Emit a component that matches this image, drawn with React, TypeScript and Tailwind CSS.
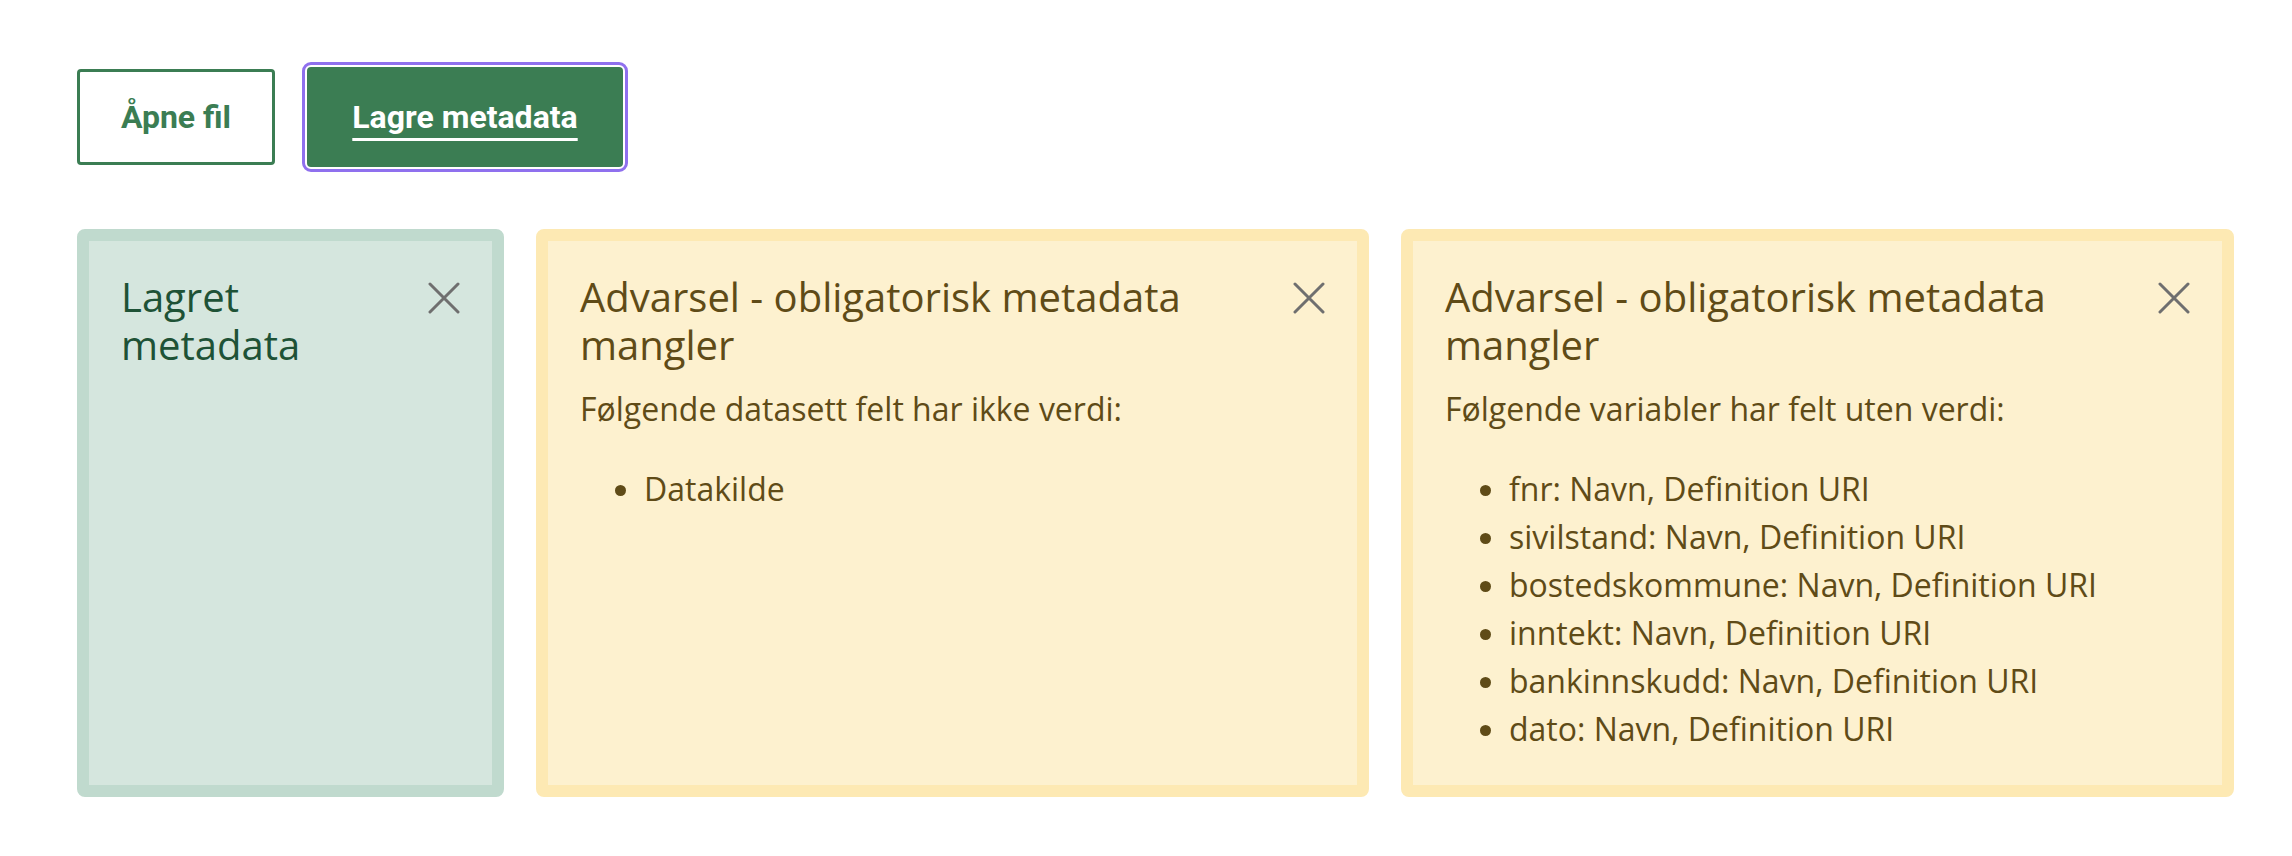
const FONT = "font-['Open_Sans',sans-serif]";

function CloseIcon() {
  return (
    <svg width="32" height="32" viewBox="0 0 32 32" fill="none">
      <path d="M2 2 L30 30 M30 2 L2 30" stroke="#6f6f6f" strokeWidth="3" strokeLinecap="round" />
    </svg>
  );
}

function Alert({ tone, title, text, items }: any) {
  const green = tone === "success";
  return (
    <div
      className={
        green
          ? "rounded-[8px] border-[12px] border-[#c0dace] bg-[#d5e6de] p-8 text-[#1e5236]"
          : "rounded-[8px] border-[12px] border-[#fde9b3] bg-[#fdf1cf] p-8 text-[#5f4b17]"
      }
    >
      <div className="flex items-start justify-between gap-4">
        <h2 className={`${FONT} text-[40px] leading-[48px] font-normal`}>{title}</h2>
        <button className="mt-[9px] shrink-0">
          <CloseIcon />
        </button>
      </div>
      {text && <p className={`${FONT} text-[32px] leading-[48px] mt-4`}>{text}</p>}
      {items && (
        <ul className={`${FONT} list-disc pl-[64px] mt-8 text-[32px] leading-[48px]`}>
          {items.map((it: string) => (
            <li key={it}>{it}</li>
          ))}
        </ul>
      )}
    </div>
  );
}

export default function App() {
  const vars = ["fnr", "sivilstand", "bostedskommune", "inntekt", "bankinnskudd", "dato"];
  return (
    <div className="min-h-screen bg-white pl-[77px] pt-[67px]">
      <div className="flex items-center gap-8 font-['Roboto',sans-serif]">
        <button className="h-[96px] w-[198px] rounded-[4px] border-[3px] border-[#3b7d53] bg-white text-[32px] font-bold text-[#3b7d53]">
          Åpne fil
        </button>
        <button className="h-[100px] w-[316px] rounded-[4px] bg-[#3b7d53] text-[32px] font-bold text-white outline-[3px] outline-offset-2 outline-[#8f70ee] outline-solid">
          <span className="underline decoration-[3px] underline-offset-[10px]">Lagre metadata</span>
        </button>
      </div>

      <div className="mt-[62px] grid grid-cols-[427px_833px_833px] gap-8">
        <Alert tone="success" title="Lagret metadata" />
        <Alert
          tone="warning"
          title="Advarsel - obligatorisk metadata mangler"
          text="Følgende datasett felt har ikke verdi:"
          items={["Datakilde"]}
        />
        <Alert
          tone="warning"
          title="Advarsel - obligatorisk metadata mangler"
          text="Følgende variabler har felt uten verdi:"
          items={vars.map((v) => `${v}: Navn, Definition URI`)}
        />
      </div>
    </div>
  );
}
